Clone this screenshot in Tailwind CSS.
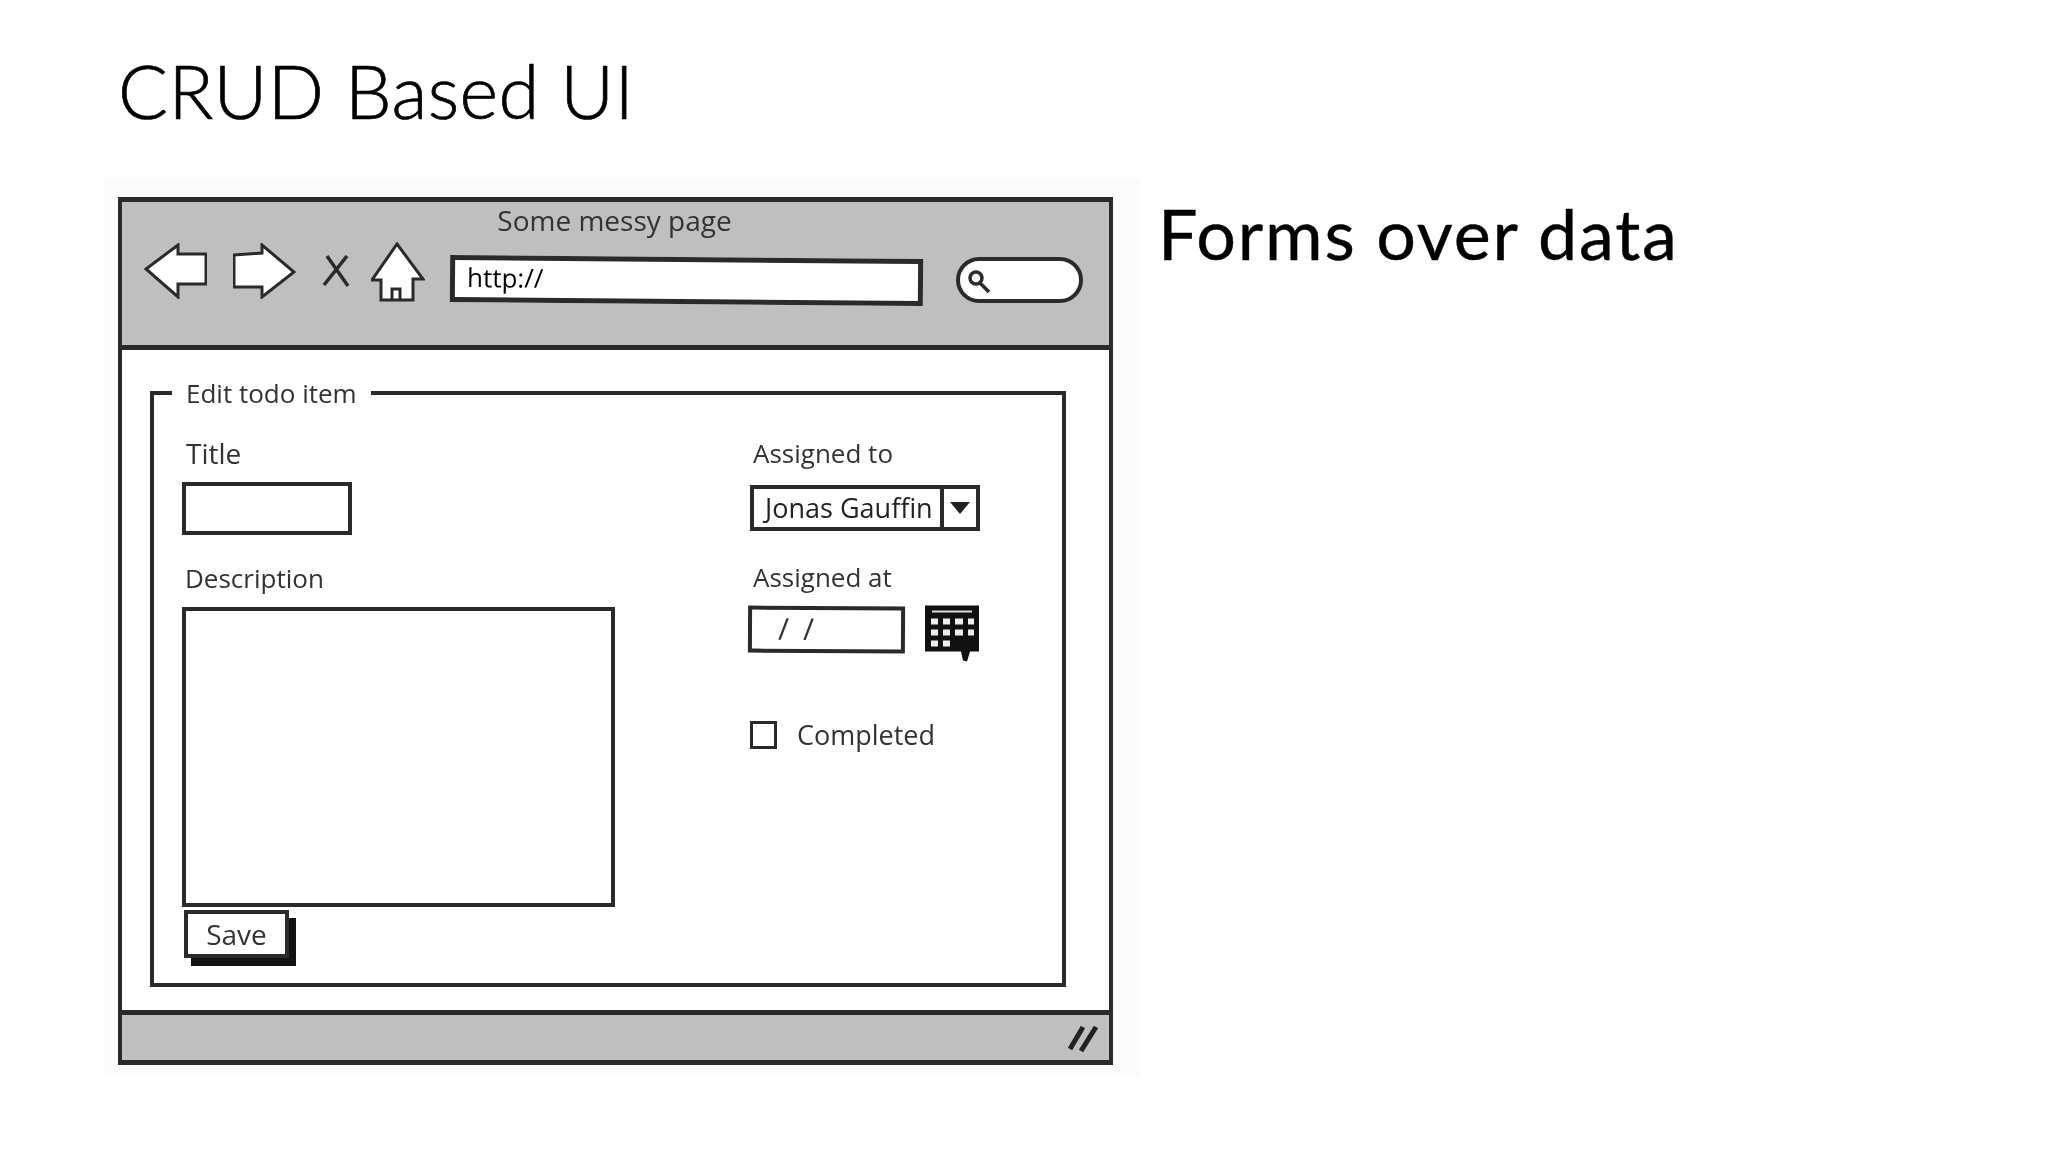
<!DOCTYPE html>
<html lang="en">
<head>
    <meta charset="UTF-8">
    <title>CRUD Based UI</title>
    <script src="https://cdn.jsdelivr.net/npm/@tailwindcss/browser@4"></script>
</head>
<body class="bg-white w-[2048px] h-[1152px] overflow-hidden font-['Lato',sans-serif] text-black">
    <h1 class="h-[179px] pl-[118px] pt-[46px] text-[74px] leading-[90px] font-light tracking-[0.4px] [-webkit-text-stroke:0.7px_black]">CRUD Based UI</h1>

    <div class="flex pl-[104px]">
        <!-- wireframe -->
        <div class="w-[1036px] h-[896px] pt-[18px] pl-[14px] bg-[#fbfbfb] blur-[0.5px] font-['Open_Sans',sans-serif] text-[#333]">
            <div class="w-[995px] h-[868px] flex flex-col bg-white">
                <div class="h-[153px] shrink-0 bg-[#bfbfbf] border-y-[5px] border-x-[4px] border-[#2a2a2a]">
                    <p class="text-center text-[28px] leading-[36px] pt-0 pr-[2px]">Some messy page</p>
                    <div class="flex items-start mt-[5px] pl-[22px]">
                        <svg class="w-[63px] h-[56px]" viewBox="0 0 63 56" fill="white" stroke="#2a2a2a" stroke-width="3"><path d="M2 26 34 2v9h28v30H34v13z"/></svg>
                        <svg class="w-[63px] h-[56px] ml-[26px]" viewBox="0 0 63 56" fill="white" stroke="#2a2a2a" stroke-width="3"><path d="M1 12 29 10V2l32 27-32 25V44H1z"/></svg>
                        <svg class="w-[28px] h-[32px] ml-[26px] mt-[12px]" viewBox="0 0 28 32" fill="none" stroke="#2a2a2a" stroke-width="3.5"><path d="M5 1 26 31M25 1 2 30"/></svg>
                        <svg class="w-[54px] h-[60px] ml-[21px] -mt-[1px]" viewBox="0 0 54 60" fill="white" stroke="#2a2a2a" stroke-width="3"><path d="M26 2 52 37H42v21H10V38H1z"/><path d="M21 58V47h8v11" fill="none"/></svg>
                        <div class="w-[473px] h-[47px] ml-[25px] mt-[14px] bg-white border-[5px] border-[#2a2a2a] rotate-[0.5deg] pl-[12px] text-[26px] leading-[34px] text-black">http://</div>
                        <div class="w-[127px] h-[46px] ml-[33px] mt-[14px] bg-white border-[4px] border-[#2a2a2a] rounded-full pl-[6px] pt-[6px]">
                            <svg class="w-[26px] h-[26px]" viewBox="0 0 26 26" fill="none" stroke="#2a2a2a" stroke-width="3.5"><circle cx="10" cy="11" r="6"/><path d="m14 16 9 9"/></svg>
                        </div>
                    </div>
                </div>

                <div class="flex-1 border-x-[4px] border-[#2a2a2a] pl-[28px] pt-[26px]">
                    <fieldset class="w-[916px] h-[611px] border-[4px] border-[#2a2a2a] pl-[28px]">
                        <legend class="-ml-[10px] px-[14px] text-[26px] leading-[34px]">Edit todo item</legend>
                        <div class="flex">
                            <div class="w-[568px]">
                                <p class="pl-[4px] mt-[26px] text-[28px] leading-[34px]">Title</p>
                                <div class="w-[170px] h-[53px] mt-[12px] border-[4px] border-[#2a2a2a]"></div>
                                <p class="pl-[3px] mt-[26px] text-[26px] leading-[34px]">Description</p>
                                <div class="w-[433px] h-[300px] mt-[12px] border-[4px] border-[#2a2a2a]"></div>
                                <button class="block w-[105px] h-[48px] mt-[3px] ml-[2px] bg-white border-[4px] border-[#2a2a2a] shadow-[7px_8px_0_#111] text-[28px] leading-[34px]">Save</button>
                            </div>
                            <div>
                                <p class="pl-[3px] mt-[26px] text-[26px] leading-[34px]">Assigned to</p>
                                <div class="flex w-[230px] h-[46px] mt-[15px] border-[4px] border-[#2a2a2a] items-center">
                                    <span class="flex-1 pl-[11px] text-[27px] leading-[34px] text-[#222]">Jonas Gauffin</span>
                                    <span class="w-[36px] h-full border-l-[4px] border-[#2a2a2a] flex items-center justify-center">
                                        <svg class="w-[20px] h-[12px]" viewBox="0 0 20 12" fill="#222"><path d="M0 0h20L10 12z"/></svg>
                                    </span>
                                </div>
                                <p class="pl-[3px] mt-[29px] text-[26px] leading-[34px]">Assigned at</p>
                                <div class="flex items-start mt-[12px] -ml-[2px]">
                                    <div class="w-[157px] h-[47px] border-[4px] border-[#2a2a2a] pl-[26px] text-[30px] leading-[38px] tracking-[14px] rotate-[0.3deg]">//</div>
                                    <svg class="w-[54px] h-[58px] ml-[20px] -mt-[1px]" viewBox="0 0 54 57">
                                        <path d="M0 0h54v46H45l-3 10-4-1-2-9H0z" fill="#111"/>
                                        <path d="M7 6h40" stroke="#ddd" stroke-width="2"/>
                                        <path fill="#eee" d="M6 13h7v6H6zM18 13h7v6h-7zM30 13h8v6h-8zM43 13h6v6h-6zM6 24h7v6H6zM18 24h7v6h-7zM30 24h8v6h-8zM43 24h6v6h-6zM6 35h7v6H6zM18 35h7v6h-7z"/>
                                    </svg>
                                </div>
                                <div class="flex items-center mt-[55px]">
                                    <div class="w-[27px] h-[28px] border-[3px] border-[#2a2a2a]"></div>
                                    <span class="ml-[20px] text-[27px] leading-[34px]">Completed</span>
                                </div>
                            </div>
                        </div>
                    </fieldset>
                </div>

                <div class="h-[55px] shrink-0 bg-[#bfbfbf] border-y-[5px] border-x-[4px] border-[#2a2a2a] flex items-center justify-end pr-[10px]">
                    <svg class="w-[32px] h-[32px]" viewBox="0 0 32 32" fill="none" stroke="#222" stroke-width="5"><path d="M3 27 16 5M14 29 29 5"/></svg>
                </div>
            </div>
        </div>

        <p class="ml-[18px] mt-[14px] text-[70px] leading-[80px] tracking-[1.8px] [-webkit-text-stroke:0.4px_black]">Forms over data</p>
    </div>
</body>
</html>
